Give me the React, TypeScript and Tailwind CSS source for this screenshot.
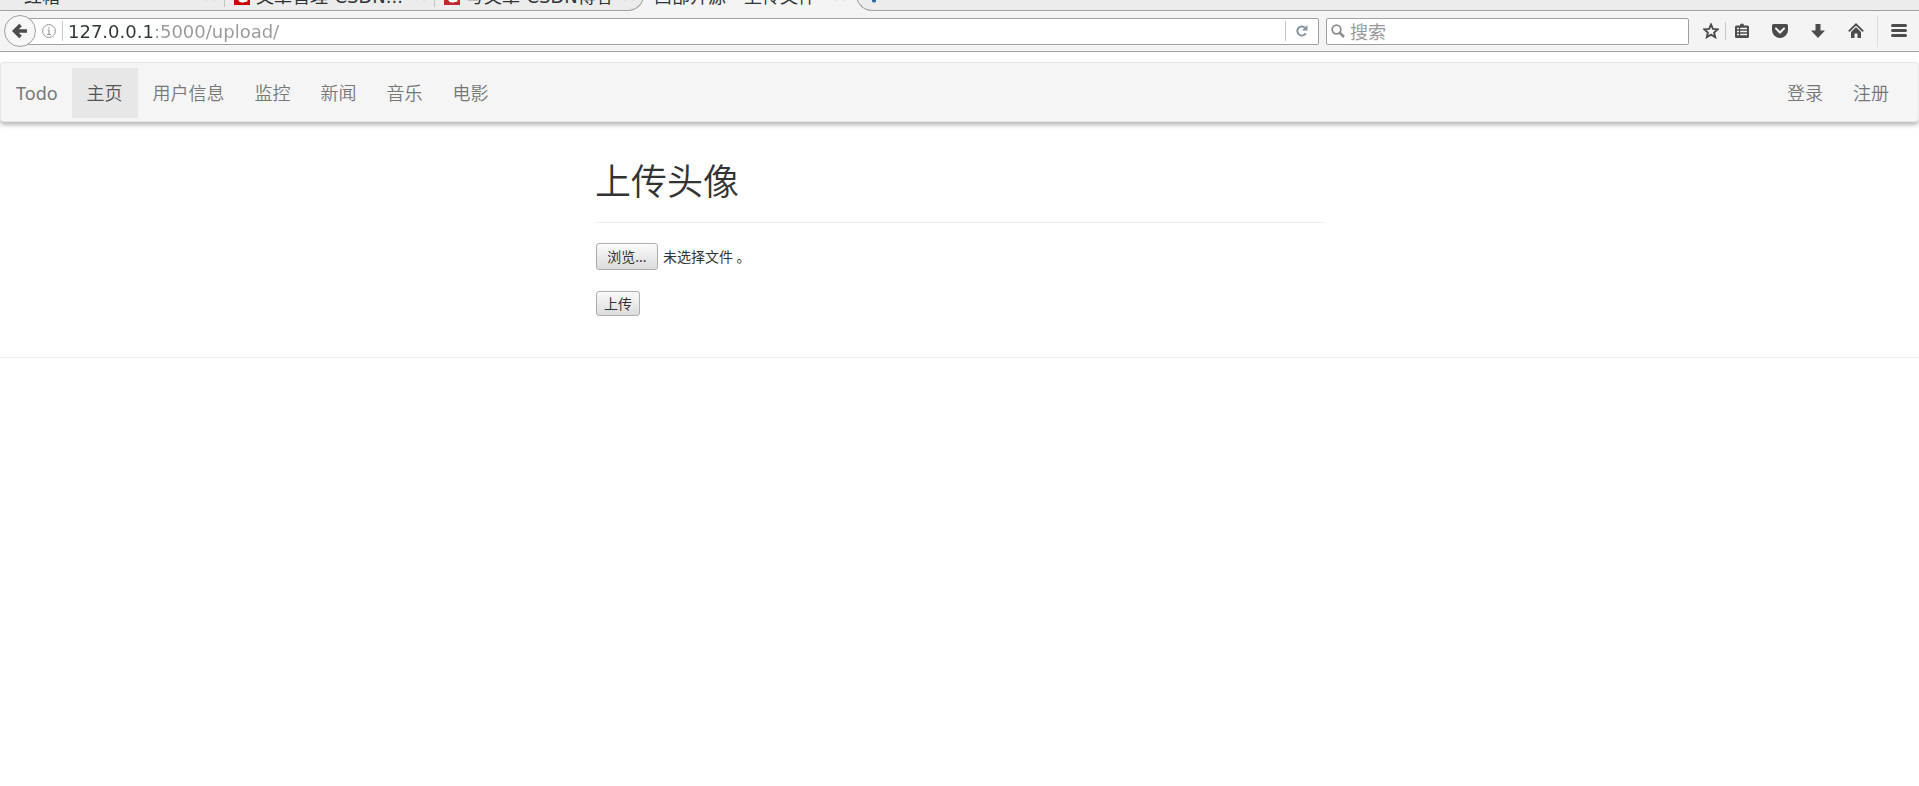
import { useRef, useState } from "react";
import type { ReactNode } from "react";

const CLOSE = "×";

function SiteIcon({ className }: { className: string }) {
  return (
    <svg viewBox="0 0 16 16" className={`h-4 w-4 shrink-0 ${className}`} aria-hidden="true">
      <rect width="16" height="16" fill="currentColor" />
      <path d="M4 5v5.500q1 3.500 5 3l4.500-1V9.500l-4 .8q-3 .5-3-2.500V5z" fill="#fff" />
    </svg>
  );
}

function Tab({ title, icon, className }: { title: string; icon?: ReactNode; className: string }) {
  return (
    <div className={`flex h-7 shrink-0 items-center pt-2 ${className}`}>
      {icon}
      <span className="flex-1 truncate leading-7 whitespace-nowrap">{title}</span>
      <button type="button" aria-label={`关闭 ${title}`} className="w-4 pb-1 leading-6 text-[#777]">
        {CLOSE}
      </button>
    </div>
  );
}

function TabStrip() {
  return (
    <div className="flex h-[11px] flex-col justify-end overflow-hidden bg-[#f4f4f4] font-['DejaVu_Sans','Noto_Sans_CJK_SC',sans-serif] text-lg text-[#2e3436]">
      <div className="flex h-8 shrink-0">
        <div className="flex w-[644px] shrink-0 rounded-br-2xl border-r border-b border-[#a0a0a0] bg-[#ececec]">
          <Tab title="红帽" className="w-[225px] border-r border-[#c4c4c4] pr-1.5 pl-6" />
          <Tab
            title="文章管理-CSDN..."
            icon={<SiteIcon className="mr-1.5 text-[#cc0000]" />}
            className="w-[210px] border-r border-[#c4c4c4] pr-1.5 pl-[9px]"
          />
          <Tab
            title="写文章-CSDN博客"
            icon={<SiteIcon className="mr-1.5 text-[#c1272d]" />}
            className="w-[208px] pr-1.5 pl-[9px]"
          />
        </div>
        <Tab title="西部开源 - 上传文件" className="w-[212px] pr-2 pl-2.5" />
        <div className="flex flex-1 rounded-bl-2xl border-b border-l border-[#a0a0a0] bg-[#ececec] pl-3">
          <button type="button" aria-label="打开新标签页" className="flex h-6 items-end">
            <svg viewBox="0 0 10 16" className="h-4 w-2.5" aria-hidden="true">
              <path d="M3 0h4v14q0 1.500-2 1.500T3 14z" fill="#2f62a8" />
            </svg>
          </button>
        </div>
      </div>
    </div>
  );
}

function ToolButton({ label, children, className }: { label: string; children: ReactNode; className: string }) {
  return (
    <button type="button" aria-label={label} className={`flex h-7 shrink-0 items-center justify-center text-[#4c4c4c] ${className}`}>
      <svg viewBox="0 0 16 16" className="h-4 w-4" aria-hidden="true">
        {children}
      </svg>
    </button>
  );
}

function AddressBar() {
  return (
    <div className="flex h-[41px] items-center border-b border-[#a0a0a0] bg-[#f4f4f4] pl-1">
      <button
        type="button"
        aria-label="后退"
        className="z-10 -mr-3 flex h-8 w-8 shrink-0 items-center justify-center rounded-full border border-[#a0a0a0] bg-[#f7f7f7]"
      >
        <svg viewBox="0 0 16 16" className="h-4 w-4" aria-hidden="true">
          <path d="M8.500 2 2.500 8l6 6M3 8h12" fill="none" stroke="#4c4c4c" strokeWidth="3.600" />
        </svg>
      </button>
      <div className="flex h-[27px] min-w-0 flex-1 items-center rounded-xs border border-[#a0a0a0] bg-white pl-[17px]">
        <svg viewBox="0 0 14 14" className="h-3.5 w-3.5 shrink-0" fill="none" stroke="#999" aria-hidden="true">
          <circle cx="7" cy="7" r="6.400" />
          <path d="M5.500 6H7v4.500M5 10.500h4M7 3v1.500" strokeWidth="1.200" />
        </svg>
        <span className="ml-1.5 h-5 w-px shrink-0 bg-[#c8c8c8]" />
        <input
          aria-label="地址"
          defaultValue="127.0.0.1:5000/upload/"
          className="ml-[5px] min-w-0 flex-1 bg-[linear-gradient(90deg,#2e3436_86px,#999_86px)] bg-clip-text pt-0.5 font-['DejaVu_Sans',sans-serif] text-lg leading-6 text-transparent caret-black outline-none"
        />
        <span className="h-5 w-px shrink-0 bg-[#c8c8c8]" />
        <button type="button" aria-label="重新载入" className="flex h-6 w-8 shrink-0 items-center justify-center">
          <svg viewBox="0 0 12 12" className="h-3 w-3" aria-hidden="true">
            <path d="M9.800 8.200A4.500 4.500 0 1 1 9 2.800" fill="none" stroke="#8795a1" strokeWidth="2" />
            <path d="M11.500 0v5.500H6z" fill="#8795a1" />
          </svg>
        </button>
      </div>
      <label className="ml-[7px] flex h-[27px] w-[363px] shrink-0 items-center rounded-xs border border-[#a0a0a0] bg-white pl-1">
        <svg viewBox="0 0 14 14" className="h-3.5 w-3.5 shrink-0" fill="none" stroke="#8c8c8c" aria-hidden="true">
          <circle cx="5.500" cy="5.500" r="4.300" strokeWidth="1.800" />
          <path d="m8.500 8.500 4.500 4.500" strokeWidth="2.600" />
        </svg>
        <input
          aria-label="搜索"
          placeholder="搜索"
          className="ml-[5px] min-w-0 flex-1 font-['Noto_Sans_CJK_SC',sans-serif] text-lg leading-6 outline-none placeholder:text-[#999]"
        />
      </label>
      <ToolButton label="加入书签" className="ml-[7px] w-[29px]">
        <path d="m8 1.500 1.900 4.400 4.800.4-3.600 3.200 1.100 4.700L8 11.700l-4.200 2.500 1.100-4.700L1.300 6.300l4.800-.4z" fill="none" stroke="currentColor" strokeWidth="1.900" />
      </ToolButton>
      <span className="h-[18px] w-px shrink-0 bg-[#c8c8c8]" />
      <ToolButton label="书签" className="w-8">
        <path d="M2.500 2.500H6q0-2 2-2t2 2h3.500q1.500 0 1.500 1.500v9.500q0 1.500-1.500 1.500h-11Q1 15 1 13.500V4q0-1.500 1.500-1.500z" fill="currentColor" />
        <path d="M3 5.500h2M3 8.500h2M3 11.500h2M6.200 5.500H13M6.200 8.500H13M6.200 11.500H13" stroke="#f4f4f4" strokeWidth="1.500" />
      </ToolButton>
      <ToolButton label="Pocket" className="ml-1.5 w-8">
        <path d="M1.500 1h13Q16 1 16 2.500V7q0 3.500-2.400 5.700Q11 15 8 15t-5.600-2.300Q0 10.500 0 7V2.500Q0 1 1.500 1z" fill="currentColor" />
        <path d="m4 5.500 4 4 4-4" fill="none" stroke="#f4f4f4" strokeWidth="2" strokeLinecap="round" />
      </ToolButton>
      <ToolButton label="下载" className="ml-1.5 w-8">
        <path d="M5.500 1h5v6.500H15l-7 7.500-7-7.500h4.500z" fill="currentColor" />
      </ToolButton>
      <ToolButton label="主页" className="ml-1.5 w-8">
        <path d="m.8 8.300 7.200-7 7.200 7" fill="none" stroke="currentColor" strokeWidth="1.800" />
        <path d="m8 4.200 5 4.800v6H9.500v-4.500h-3V15H3V9z" fill="currentColor" />
      </ToolButton>
      <span className="ml-[5px] h-8 w-px shrink-0 bg-[#dcdcdc]" />
      <ToolButton label="打开菜单" className="w-[41px]">
        <path d="M1.500 2.500h13M1.500 7.500h13M1.500 12.500h13" stroke="currentColor" strokeWidth="3" strokeLinecap="round" />
      </ToolButton>
    </div>
  );
}

const LINKS = ["主页", "用户信息", "监控", "新闻", "音乐", "电影"];
const ACCOUNT_LINKS = ["登录", "注册"];

function NavLink({ text, active }: { text: string; active?: boolean }) {
  return (
    <a
      href="#"
      aria-current={active ? "page" : undefined}
      className={`flex h-[50px] items-center px-[15px] font-[350] ${active ? "bg-[#e7e7e7] text-[#555]" : "text-[#777]"}`}
    >
      {text}
    </a>
  );
}

function Navbar() {
  return (
    <nav className="flex items-center rounded-sm border border-[#e7e7e7] bg-[#f5f5f5] pt-[5px] pr-3.5 pb-[3px] text-lg shadow-[0_3px_4px_rgba(0,0,0,0.28)]">
      <a href="#" className="pr-3.5 pl-[15px] text-[#777]">
        Todo
      </a>
      {LINKS.map((text, i) => (
        <NavLink key={text} text={text} active={i === 0} />
      ))}
      <div className="ml-auto flex">
        {ACCOUNT_LINKS.map((text) => (
          <NavLink key={text} text={text} />
        ))}
      </div>
    </nav>
  );
}

function UploadForm() {
  const picker = useRef<HTMLInputElement>(null);
  const [fileName, setFileName] = useState("未选择文件 。");
  const button =
    "rounded-[3px] border border-[#adadad] bg-linear-to-b from-[#fafafa] to-[#dcdcdc] text-[#333]";
  return (
    <form className="pl-px text-sm leading-5" onSubmit={(e) => e.preventDefault()}>
      <div className="flex items-center gap-[5px]">
        <input
          ref={picker}
          id="avatar"
          type="file"
          className="hidden"
          onChange={(e) => setFileName(e.target.files?.[0]?.name ?? "未选择文件 。")}
        />
        <button type="button" className={`h-[27px] w-[62px] ${button}`} onClick={() => picker.current?.click()}>
          浏览...
        </button>
        <label htmlFor="avatar" className="text-[#333]">
          {fileName}
        </label>
      </div>
      <button type="submit" className={`mt-[21px] h-[25px] w-11 ${button}`}>
        上传
      </button>
    </form>
  );
}

export default function App() {
  return (
    <div className="min-h-screen bg-white font-['Noto_Sans','Noto_Sans_CJK_SC',sans-serif] text-[#333]">
      <header>
        <TabStrip />
        <AddressBar />
      </header>
      <div className="pt-2.5">
        <Navbar />
        <main className="mx-auto w-[38.1%] pt-10 pl-px">
          <h1 className="text-4xl leading-10 font-[350]">上传头像</h1>
          <hr className="mt-5 mb-5 border-[#eee]" />
          <UploadForm />
        </main>
        <hr className="mt-[41px] border-[#eee]" />
      </div>
    </div>
  );
}
